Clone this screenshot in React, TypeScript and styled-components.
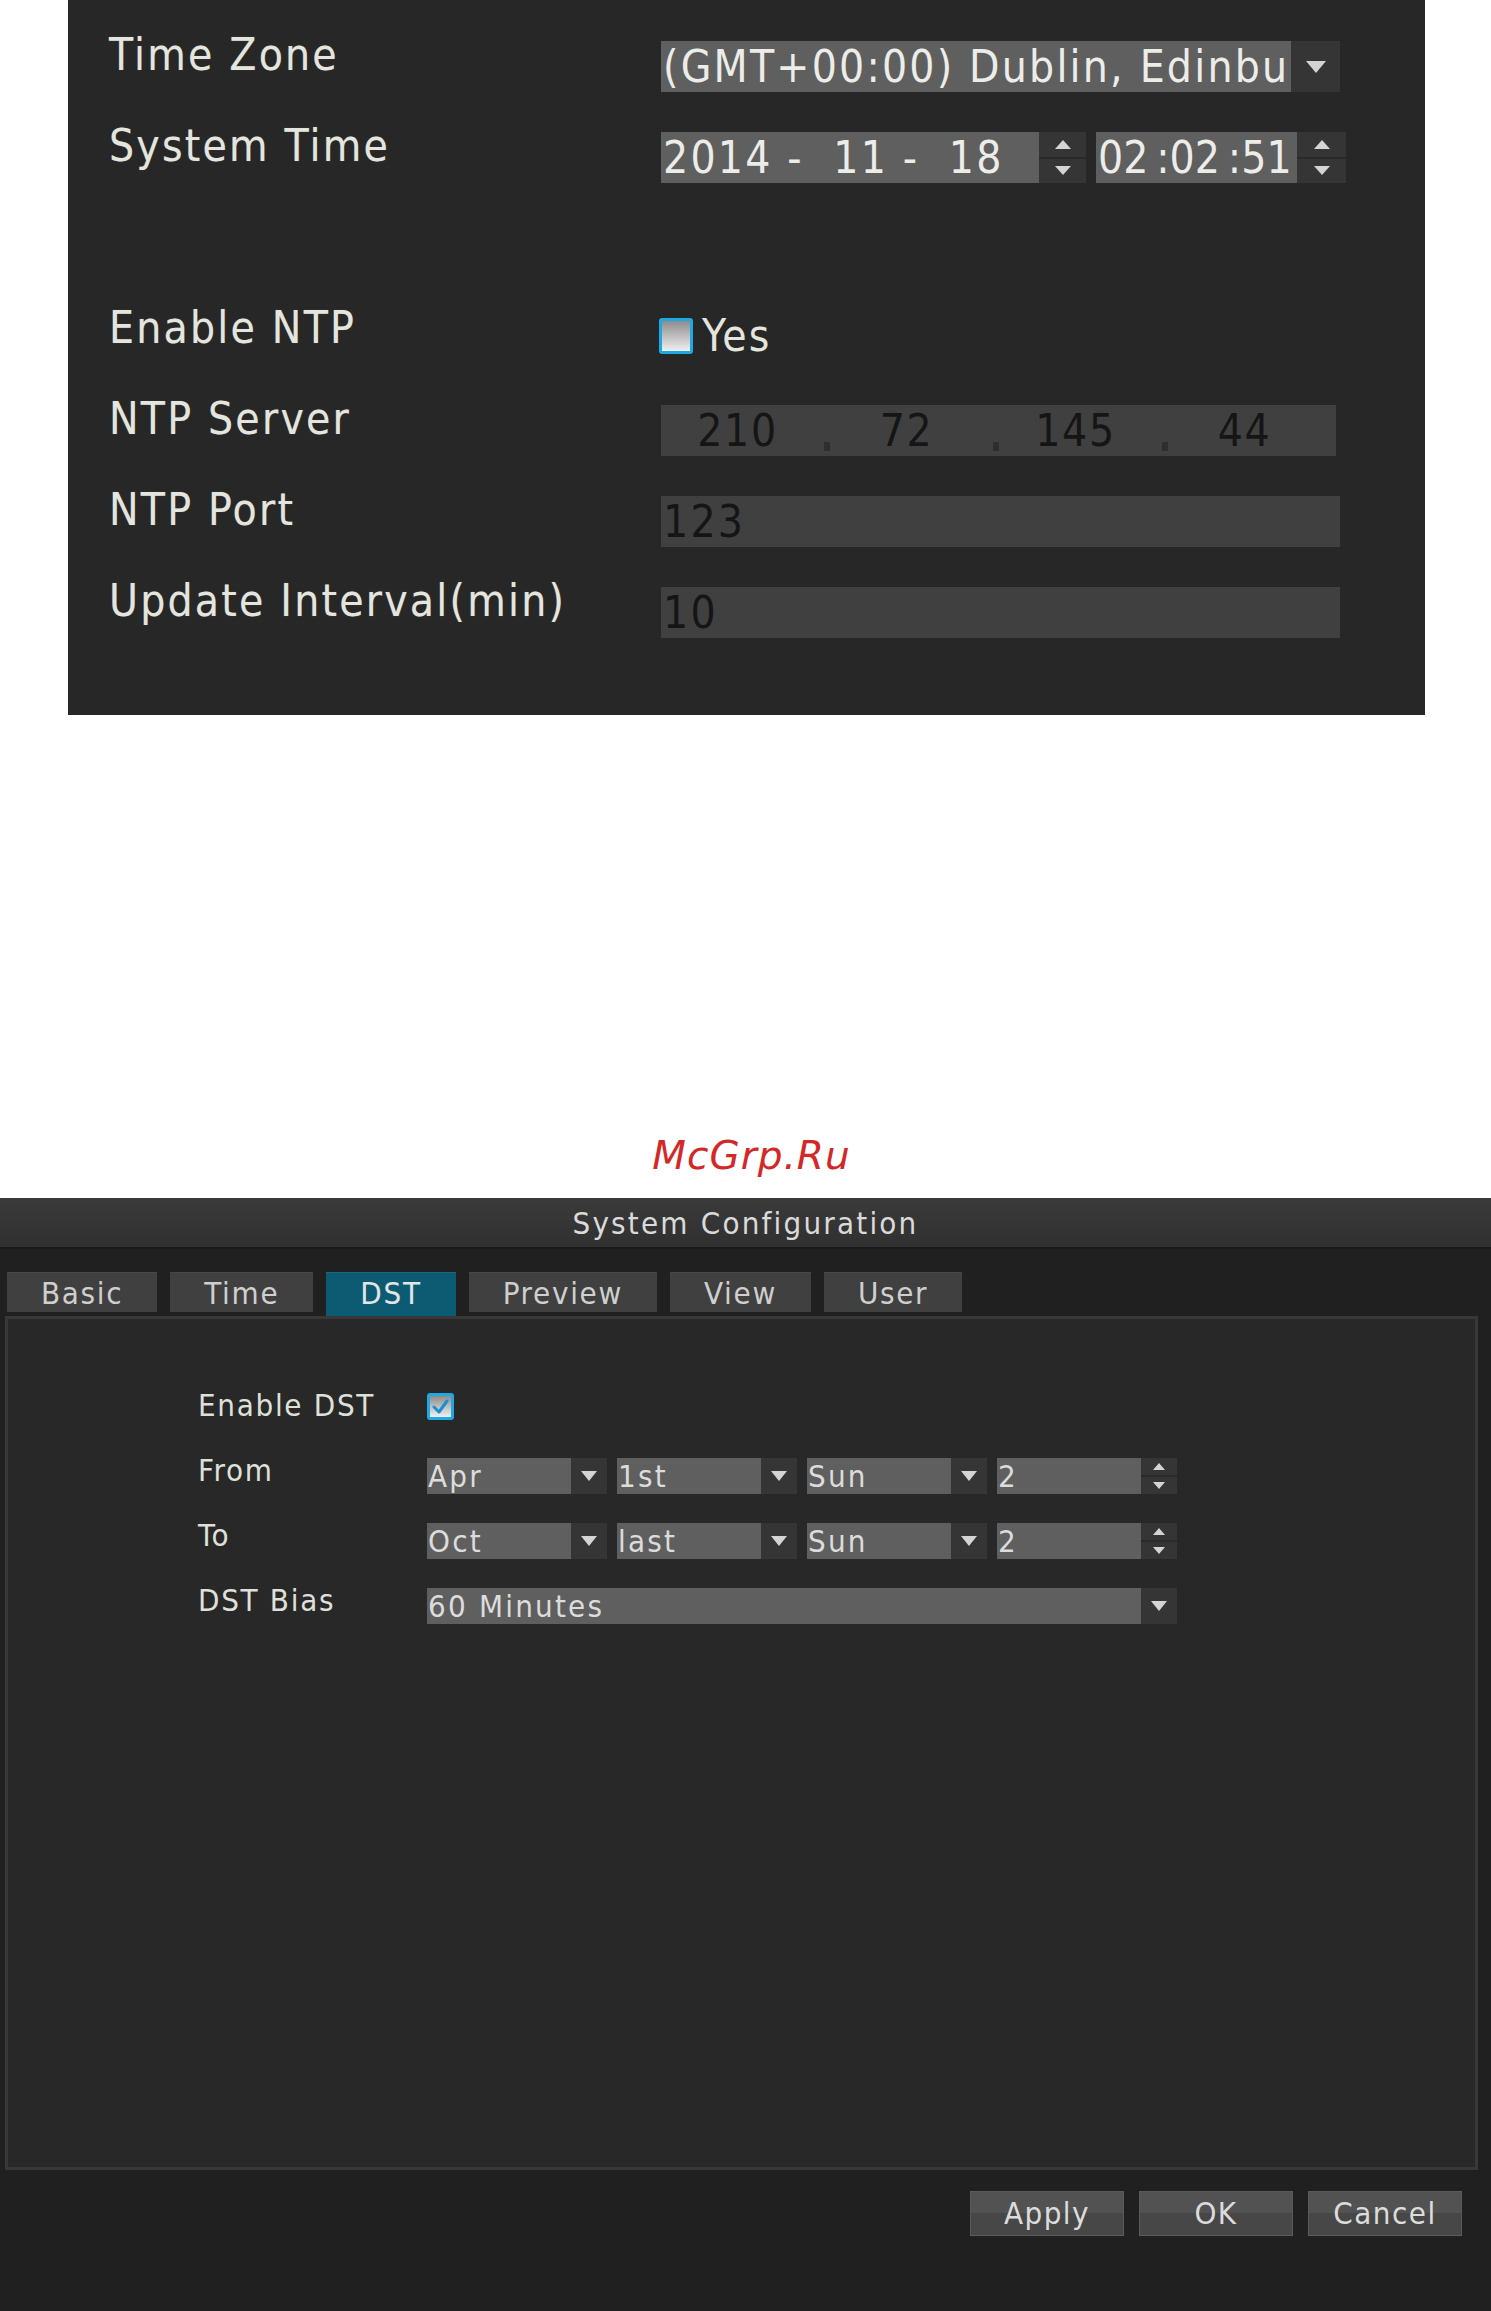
import React from "react";
import styled, { createGlobalStyle } from "styled-components";

const GlobalStyle = createGlobalStyle`
  html, body {
    margin: 0;
    padding: 0;
    background: #ffffff;
  }
  body {
    font-family: "DejaVu Sans Condensed", "DejaVu Sans", sans-serif;
    font-stretch: semi-condensed;
  }
`;

function Triangle({ dir = "down", w = 16, h = 10, color = "#d4d4d4" }: { dir?: "up" | "down"; w?: number; h?: number; color?: string }) {
  const pts = dir === "down" ? `0,0 ${w},0 ${w / 2},${h}` : `0,${h} ${w},${h} ${w / 2},0`;
  return (
    <svg width={w} height={h} viewBox={`0 0 ${w} ${h}`}>
      <polygon points={pts} fill={color} />
    </svg>
  );
}

function CheckMark() {
  return (
    <svg width="19" height="17" viewBox="0 0 19 17">
      <path d="M3 9 L8 14 L16 3" fill="none" stroke="#1a8fd6" strokeWidth="3" strokeLinecap="round" strokeLinejoin="round" />
    </svg>
  );
}

/* ---------- top panel: Time settings ---------- */

const Page = styled.div`
  display: flex;
  flex-direction: column;
  width: 1491px;
`;

const TimePanel = styled.section`
  margin-left: 68px;
  width: 1357px;
  box-sizing: border-box;
  background: #272727;
  padding: 21px 0 57px 41px;
`;

const FormGrid = styled.div`
  display: grid;
  grid-template-columns: 552px 690px;
  grid-auto-rows: 91px;
`;

const BigLabel = styled.div`
  color: #e3e5de;
  font-size: 44px;
  line-height: 67px;
  letter-spacing: 2.2px;
  white-space: nowrap;
  text-shadow: 0 0 1px rgba(255, 255, 255, 0.25);
`;

const Cell = styled.div<{ $top?: number }>`
  display: flex;
  align-items: flex-start;
  gap: 10px;
  padding-top: ${(p) => p.$top ?? 20}px;
`;

const BigBox = styled.div<{ $w: number }>`
  display: flex;
  width: ${(p) => p.$w}px;
  height: 51px;
`;

const BigValue = styled.div<{ $disabled?: boolean; $tight?: boolean }>`
  flex: 1;
  background: ${(p) => (p.$disabled ? "#404040" : "#5f5f5f")};
  color: ${(p) => (p.$disabled ? "#151515" : "#ecece8")};
  font-size: 44px;
  line-height: 51px;
  letter-spacing: ${(p) => (p.$tight ? "0px" : "2.2px")};
  padding-left: 2px;
  white-space: pre;
  overflow: hidden;
`;

const ArrowCell = styled.div<{ $w: number }>`
  width: ${(p) => p.$w}px;
  background: #353535;
  display: flex;
  align-items: center;
  justify-content: center;
`;

const SpinCell = styled.div<{ $w: number }>`
  width: ${(p) => p.$w}px;
  background: #353535;
  display: flex;
  flex-direction: column;
`;

const SpinHalf = styled.div<{ $top?: boolean }>`
  flex: 1;
  display: flex;
  align-items: center;
  justify-content: center;
  border-top: ${(p) => (p.$top ? "none" : "2px solid #2a2a2a")};
`;

const CheckRow = styled.div`
  display: flex;
  align-items: center;
  gap: 9px;
  margin-left: -2px;
`;

const CheckBox = styled.div<{ $w: number; $h: number }>`
  width: ${(p) => p.$w}px;
  height: ${(p) => p.$h}px;
  box-sizing: border-box;
  border: 3px solid #1ea9e2;
  border-radius: 3px;
  background: linear-gradient(#8c8c8c, #f0f0f0);
  display: flex;
  align-items: center;
  justify-content: center;
`;

const YesText = styled.span`
  color: #e3e5de;
  font-size: 44px;
  line-height: 36px;
  letter-spacing: 2px;
`;

const IpBox = styled.div`
  display: flex;
  width: 675px;
  height: 51px;
  background: #404040;
`;

const Octet = styled.div`
  width: 163px;
  box-sizing: border-box;
  padding-right: 10px;
  text-align: center;
  color: #151515;
  font-size: 44px;
  line-height: 51px;
  letter-spacing: 1.6px;
`;

const IpDot = styled.div`
  width: 6px;
  display: flex;
  align-items: flex-end;
  padding-bottom: 5px;
  &::after {
    content: "";
    display: block;
    width: 6px;
    height: 9px;
    background: #2e2e2e;
  }
`;

/* ---------- watermark ---------- */

const Watermark = styled.div`
  margin: 418px 0 19px;
  padding-left: 12px;
  text-align: center;
  color: #d42727;
  font-family: "DejaVu Sans", sans-serif;
  font-stretch: normal;
  font-style: italic;
  font-size: 39px;
  line-height: 46px;
  letter-spacing: 1px;
`;

/* ---------- bottom dialog: System Configuration ---------- */

const Dialog = styled.section`
  height: 1113px;
  background: #202020;
  display: flex;
  flex-direction: column;
`;

const TitleBar = styled.div`
  height: 48px;
  border-top: 1px solid #3c3c3c;
  border-bottom: 2px solid #1a1a1a;
  background: linear-gradient(#3a3a3a, #303030);
  color: #dadada;
  text-align: center;
  font-size: 31px;
  line-height: 48px;
  letter-spacing: 2.2px;
`;

const TabBar = styled.div`
  display: flex;
  align-items: flex-start;
  gap: 13px;
  margin-top: 23px;
  padding-left: 7px;
  height: 44px;
`;

const Tab = styled.div<{ $active?: boolean }>`
  height: ${(p) => (p.$active ? 44 : 40)}px;
  padding: 0 34px;
  background: ${(p) => (p.$active ? "#0d5b73" : "#404040")};
  border-top: 1px solid ${(p) => (p.$active ? "#146880" : "#474747")};
  box-sizing: border-box;
  color: ${(p) => (p.$active ? "#e2e6e8" : "#cfcfcf")};
  font-size: 31px;
  line-height: 40px;
  letter-spacing: 1.7px;
`;

const Panel = styled.div`
  margin: 0 13px 0 5px;
  height: 854px;
  box-sizing: border-box;
  border: 3px solid #383838;
  background: #282828;
  padding: 74px 0 0 190px;
`;

const DstGrid = styled.div`
  display: grid;
  grid-template-columns: 229px auto;
  grid-auto-rows: 36px;
  row-gap: 29px;
`;

const SmallLabel = styled.div`
  color: #dfe0da;
  font-size: 31px;
  line-height: 24px;
  letter-spacing: 1.7px;
  white-space: nowrap;
`;

const ControlRow = styled.div`
  display: flex;
  gap: 10px;
  align-items: flex-start;
`;

const SmallBox = styled.div<{ $w: number }>`
  display: flex;
  width: ${(p) => p.$w}px;
  height: 36px;
`;

const SmallValue = styled.div`
  flex: 1;
  background: #5f5f5f;
  color: #dcdcdc;
  font-size: 31px;
  line-height: 36px;
  letter-spacing: 2.2px;
  padding-left: 1px;
  white-space: nowrap;
  overflow: hidden;
`;

const ButtonRow = styled.div`
  display: flex;
  justify-content: flex-end;
  gap: 15px;
  margin-top: 21px;
  padding-right: 29px;
`;

const Button = styled.div`
  width: 154px;
  height: 45px;
  box-sizing: border-box;
  border: 1px solid #5a5a5a;
  background: linear-gradient(#525252 0%, #525252 50%, #474747 50%, #474747 100%);
  color: #dcdcdc;
  text-align: center;
  font-size: 31px;
  line-height: 43px;
  letter-spacing: 1.5px;
`;

function BigSelect({ value, w }: { value: string; w: number }) {
  return (
    <BigBox $w={w}>
      <BigValue>{value}</BigValue>
      <ArrowCell $w={49}>
        <Triangle w={20} h={12} />
      </ArrowCell>
    </BigBox>
  );
}

function BigSpin({ value, w, sw, tight }: { value: string; w: number; sw: number; tight?: boolean }) {
  return (
    <BigBox $w={w}>
      <BigValue $tight={tight}>{value}</BigValue>
      <SpinCell $w={sw}>
        <SpinHalf $top>
          <Triangle dir="up" w={16} h={9} />
        </SpinHalf>
        <SpinHalf>
          <Triangle w={16} h={9} />
        </SpinHalf>
      </SpinCell>
    </BigBox>
  );
}

function SmallSelect({ value, w = 180 }: { value: string; w?: number }) {
  return (
    <SmallBox $w={w}>
      <SmallValue>{value}</SmallValue>
      <ArrowCell $w={36}>
        <Triangle w={16} h={10} />
      </ArrowCell>
    </SmallBox>
  );
}

function SmallSpin({ value }: { value: string }) {
  return (
    <SmallBox $w={180}>
      <SmallValue>{value}</SmallValue>
      <SpinCell $w={36}>
        <SpinHalf $top>
          <Triangle dir="up" w={12} h={7} />
        </SpinHalf>
        <SpinHalf>
          <Triangle w={12} h={7} />
        </SpinHalf>
      </SpinCell>
    </SmallBox>
  );
}

const tabs = ["Basic", "Time", "DST", "Preview", "View", "User"];

export default function App() {
  return (
    <Page>
      <GlobalStyle />
      <TimePanel>
        <FormGrid>
          <BigLabel>Time Zone</BigLabel>
          <Cell>
            <BigSelect value="(GMT+00:00) Dublin, Edinbu" w={679} />
          </Cell>

          <BigLabel>System Time</BigLabel>
          <Cell>
            <BigSpin value="2014 -  11 -  18" w={425} sw={47} />
            <BigSpin value={"02\u2009:02\u2009:51"} w={250} sw={49} tight />
          </Cell>

          <div />
          <div />

          <BigLabel>Enable NTP</BigLabel>
          <Cell $top={24}>
            <CheckRow>
              <CheckBox $w={34} $h={36} />
              <YesText>Yes</YesText>
            </CheckRow>
          </Cell>

          <BigLabel>NTP Server</BigLabel>
          <Cell>
            <IpBox>
              <Octet>210</Octet>
              <IpDot />
              <Octet>72</Octet>
              <IpDot />
              <Octet>145</Octet>
              <IpDot />
              <Octet>44</Octet>
            </IpBox>
          </Cell>

          <BigLabel>NTP Port</BigLabel>
          <Cell>
            <BigBox $w={679}>
              <BigValue $disabled>123</BigValue>
            </BigBox>
          </Cell>

          <BigLabel>Update Interval(min)</BigLabel>
          <Cell>
            <BigBox $w={679}>
              <BigValue $disabled>10</BigValue>
            </BigBox>
          </Cell>
        </FormGrid>
      </TimePanel>

      <Watermark>McGrp.Ru</Watermark>

      <Dialog>
        <TitleBar>System Configuration</TitleBar>
        <TabBar>
          {tabs.map((t) => (
            <Tab key={t} $active={t === "DST"}>
              {t}
            </Tab>
          ))}
        </TabBar>
        <Panel>
          <DstGrid>
            <SmallLabel>Enable DST</SmallLabel>
            <ControlRow>
              <CheckBox $w={27} $h={27}>
                <CheckMark />
              </CheckBox>
            </ControlRow>

            <SmallLabel>From</SmallLabel>
            <ControlRow>
              <SmallSelect value="Apr" />
              <SmallSelect value="1st" />
              <SmallSelect value="Sun" />
              <SmallSpin value="2" />
            </ControlRow>

            <SmallLabel>To</SmallLabel>
            <ControlRow>
              <SmallSelect value="Oct" />
              <SmallSelect value="last" />
              <SmallSelect value="Sun" />
              <SmallSpin value="2" />
            </ControlRow>

            <SmallLabel>DST Bias</SmallLabel>
            <ControlRow>
              <SmallSelect value="60 Minutes" w={750} />
            </ControlRow>
          </DstGrid>
        </Panel>
        <ButtonRow>
          <Button>Apply</Button>
          <Button>OK</Button>
          <Button>Cancel</Button>
        </ButtonRow>
      </Dialog>
    </Page>
  );
}
